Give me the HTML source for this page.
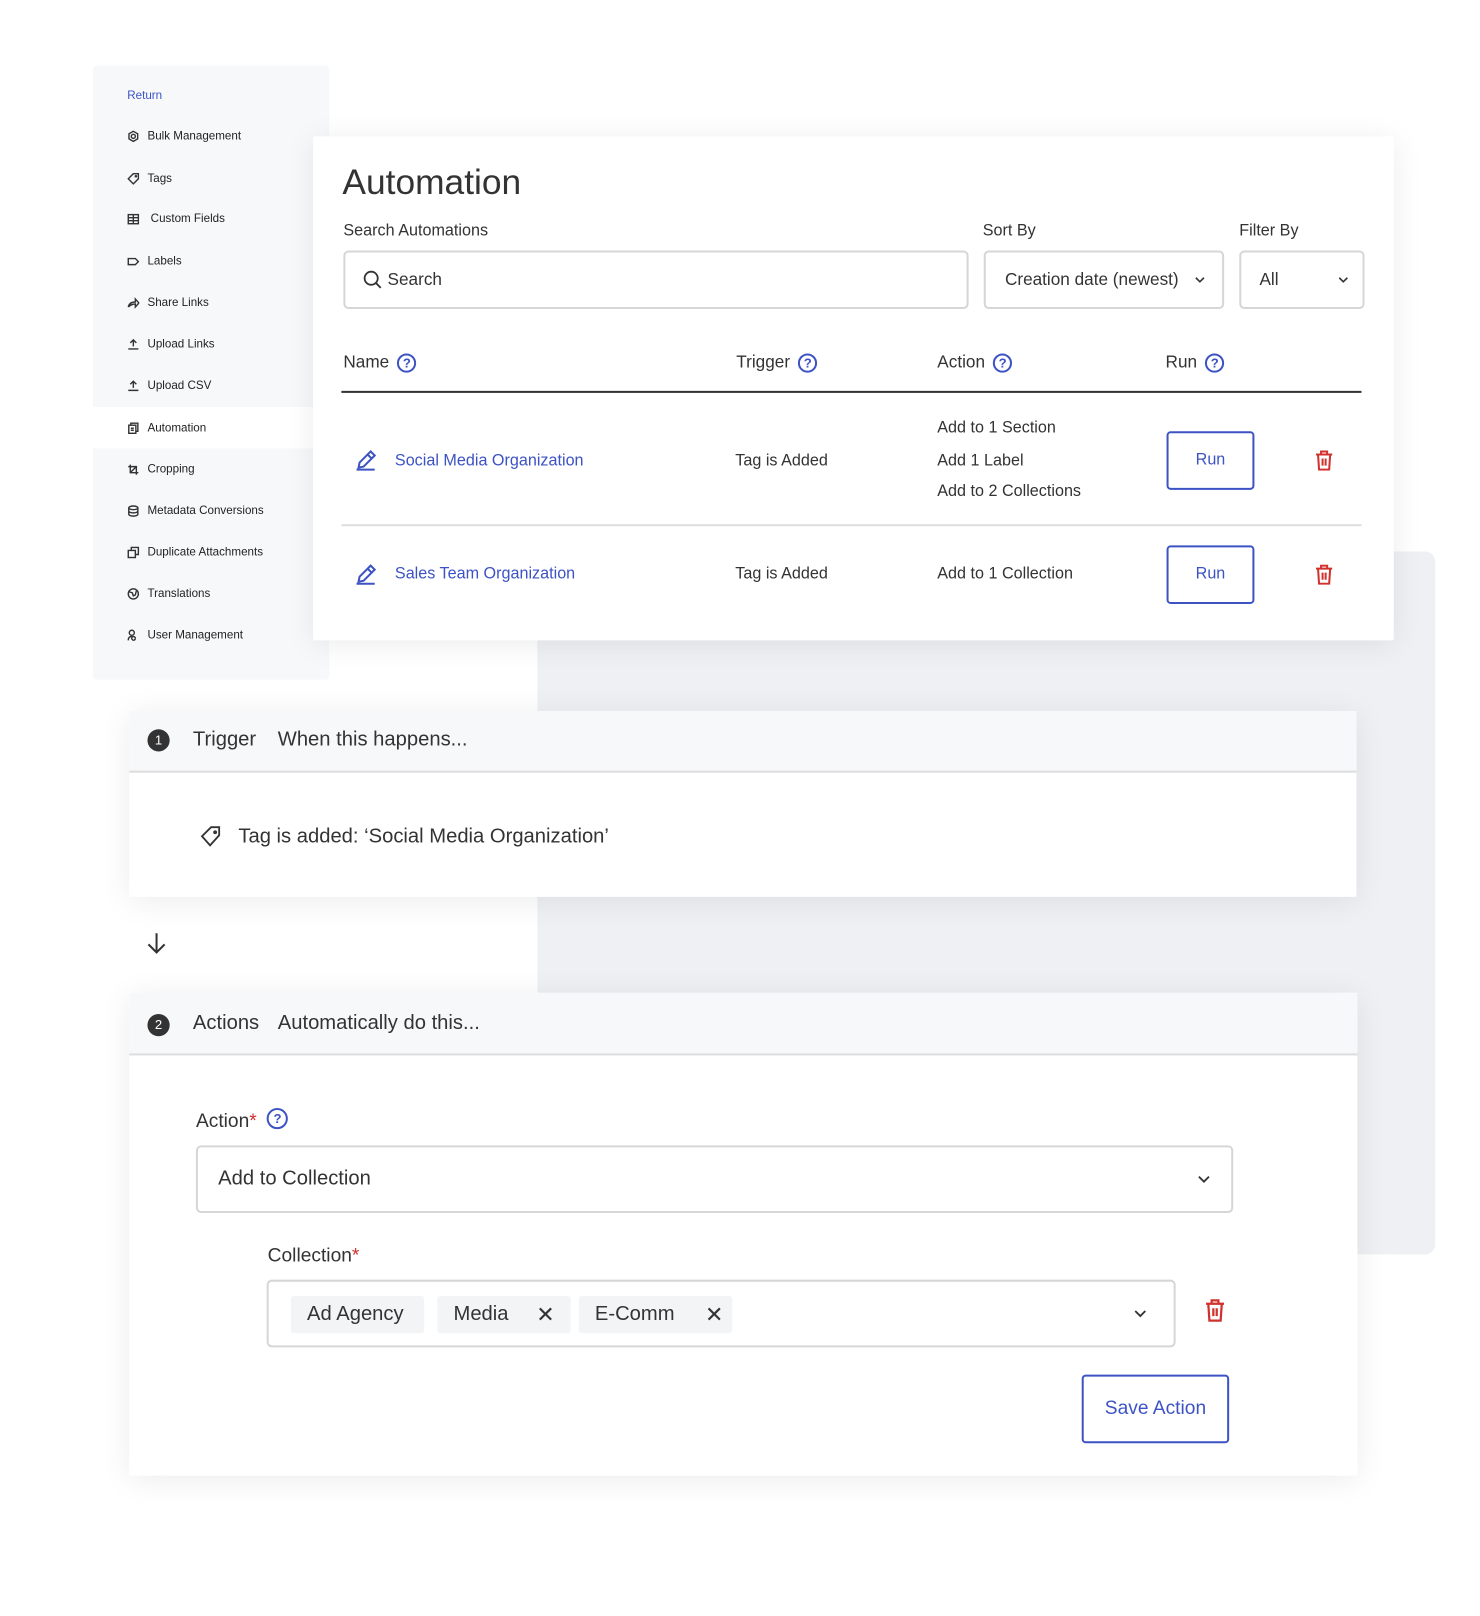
<!DOCTYPE html>
<html><head><meta charset="utf-8"><style>
*{box-sizing:border-box;margin:0;padding:0}
body{width:1480px;height:1600px;background:#fff;font-family:"Liberation Sans",sans-serif;color:#333;position:relative;overflow:hidden}
#w{position:absolute;left:0;top:0;width:1480px;height:1600px;transform:scale(1.01);transform-origin:0 0}
.abs{position:absolute}
.side{left:92px;top:65px;width:234px;height:608px;background:#f7f8fa;border-radius:4px}
.si{position:absolute;left:34px;font-size:11.5px;color:#222;display:flex;align-items:center;gap:8px;transform:translateY(-50%)}
.si svg{width:12px;height:12px;stroke:#333;fill:none;stroke-width:1.4}
.panel{left:532px;top:546px;width:889px;height:696px;background:#eef0f4;border-radius:10px}
.card{background:#fff;box-shadow:0 4px 30px rgba(0,0,0,.08)}
.lbl{font-size:16px;color:#333}
.box{position:absolute;border:2px solid #d6d6d6;border-radius:5px;background:#fff;display:flex;align-items:center;font-size:17px;color:#333}
.help{display:inline-block;width:19px;height:19px;border:2px solid #3d53c4;border-radius:50%;color:#3d53c4;font-size:13px;font-weight:bold;text-align:center;line-height:15px;vertical-align:middle;margin-left:8px}
.th{position:absolute;top:359px;transform:translateY(-50%);font-size:17px}
.td{position:absolute;font-size:16px;transform:translateY(-50%)}
.link{color:#3d53c4}
.run{position:absolute;width:87px;height:58px;border:2px solid #3d53c4;border-radius:4px;color:#3d53c4;font-size:16px;display:flex;align-items:center;justify-content:center}
.trash{position:absolute;width:18px;height:20px}
.hdr{position:absolute;left:0;right:0;top:0;background:#f7f8fa;border-bottom:2px solid #ddd}
.num{position:absolute;width:22px;height:22px;border-radius:50%;background:#333;color:#fff;font-size:13px;text-align:center;line-height:22px}
.chip{position:absolute;top:14px;height:37px;background:#f3f4f6;border-radius:3px;font-size:20px;display:flex;align-items:center;padding-left:16px}
</style></head><body><div id="w">

<div class="abs side">
<div class="si" style="top:30px;color:#3d53c4">Return</div>
<div class="si" style="top:70px"><svg viewBox="0 0 12 12"><circle cx="6" cy="6" r="2"/><path d="M6 1l4.3 2.5v5L6 11 1.7 8.5v-5z"/></svg>Bulk Management</div>
<div class="si" style="top:112px"><svg viewBox="0 0 12 12"><path d="M1 6l5-5h5v5l-5 5z"/><circle cx="8.5" cy="3.5" r=".6"/></svg>Tags</div>
<div class="si" style="top:152px"><svg viewBox="0 0 12 12"><rect x="1" y="1.5" width="10" height="9"/><path d="M1 4.5h10M1 7.5h10M6 1.5v9"/></svg>&nbsp;Custom Fields</div>
<div class="si" style="top:194px"><svg viewBox="0 0 12 12"><path d="M1 3h7l3 3-3 3H1z"/></svg>Labels</div>
<div class="si" style="top:235px"><svg viewBox="0 0 12 12"><path d="M1 10q1-5 7-5V2l3.5 4L8 10V7q-4 0-7 3"/></svg>Share Links</div>
<div class="si" style="top:276px"><svg viewBox="0 0 12 12"><path d="M6 8V1.5M3 4.5l3-3 3 3M1 10.5h10"/></svg>Upload Links</div>
<div class="si" style="top:317px"><svg viewBox="0 0 12 12"><path d="M6 8V1.5M3 4.5l3-3 3 3M1 10.5h10"/></svg>Upload CSV</div>
<div class="abs" style="left:0;top:338px;width:218px;height:41px;background:#fff"></div>
<div class="si" style="top:359px"><svg viewBox="0 0 12 12"><rect x="1.5" y="3" width="7" height="8"/><path d="M3.5 3V1h7v8H8.5M3.5 6h3M3.5 8h3"/></svg>Automation</div>
<div class="si" style="top:400px"><svg viewBox="0 0 12 12"><path d="M3 1v8h8M1 3h8v8M3 9l6-6"/></svg>Cropping</div>
<div class="si" style="top:441px"><svg viewBox="0 0 12 12"><ellipse cx="6" cy="2.8" rx="4.5" ry="1.8"/><path d="M1.5 2.8v6.4c0 1 2 1.8 4.5 1.8s4.5-.8 4.5-1.8V2.8M1.5 6c0 1 2 1.8 4.5 1.8s4.5-.8 4.5-1.8"/></svg>Metadata Conversions</div>
<div class="si" style="top:482px"><svg viewBox="0 0 12 12"><rect x="1" y="4" width="7" height="7"/><path d="M4 4V1h7v7H8"/></svg>Duplicate Attachments</div>
<div class="si" style="top:523px"><svg viewBox="0 0 12 12"><circle cx="6" cy="6" r="5"/><path d="M2 4l3 1 1 3 2-1 1-4"/></svg>Translations</div>
<div class="si" style="top:564px"><svg viewBox="0 0 12 12"><circle cx="4.5" cy="3.5" r="2.5"/><path d="M1 11q0-4 4-4M8 9a1.8 1.8 0 1 0 0 .1"/></svg>User Management</div>
</div>

<div class="abs panel"></div>

<div class="abs card" style="left:310px;top:135px;width:1070px;height:499px;border-radius:2px"></div>
<div class="abs" style="left:339px;top:161px;font-size:35px;color:#333">Automation</div>
<div class="abs lbl" style="left:340px;top:220px">Search Automations</div>
<div class="abs lbl" style="left:973px;top:220px">Sort By</div>
<div class="abs lbl" style="left:1227px;top:220px">Filter By</div>
<div class="box" style="left:340px;top:248px;width:619px;height:58px;padding-left:17px"><svg width="20" height="20" viewBox="0 0 20 20" fill="none" stroke="#333" stroke-width="1.8"><circle cx="8.5" cy="8.5" r="6.5"/><path d="M13.5 13.5l4.5 4.5"/></svg>&nbsp;Search</div>
<div class="box" style="left:974px;top:248px;width:238px;height:58px;padding-left:19px">Creation date (newest)<svg style="margin-left:15px" width="12" height="8" viewBox="0 0 12 8" fill="none" stroke="#333" stroke-width="1.6"><path d="M2 2l4 4 4-4"/></svg></div>
<div class="box" style="left:1227px;top:248px;width:124px;height:58px;padding-left:18px">All<svg style="margin-left:58px" width="12" height="8" viewBox="0 0 12 8" fill="none" stroke="#333" stroke-width="1.6"><path d="M2 2l4 4 4-4"/></svg></div>

<div class="th" style="left:340px">Name<span class="help">?</span></div>
<div class="th" style="left:729px">Trigger<span class="help">?</span></div>
<div class="th" style="left:928px">Action<span class="help">?</span></div>
<div class="th" style="left:1154px">Run<span class="help">?</span></div>
<div class="abs" style="left:338px;top:387px;width:1010px;height:2px;background:#333"></div>

<svg class="abs" style="left:350px;top:444px" width="24" height="24" viewBox="0 0 24 24" fill="none" stroke="#3d53c4" stroke-width="2"><path d="M3 21h18M5 19l1-5L17 3l4 4-11 11z M14 6l4 4"/></svg>
<div class="td link" style="left:391px;top:457px">Social Media Organization</div>
<div class="td" style="left:728px;top:457px">Tag is Added</div>
<div class="td" style="left:928px;top:424px">Add to 1 Section</div>
<div class="td" style="left:928px;top:457px">Add 1 Label</div>
<div class="td" style="left:928px;top:487px">Add to 2 Collections</div>
<div class="run" style="left:1155px;top:427px">Run</div>
<svg class="trash" style="left:1302px;top:446px" viewBox="0 0 18 20" fill="none" stroke="#d0312d" stroke-width="2"><path d="M1 4h16M6 4V1h6v3M3 4l1 15h10l1-15M7.5 8v7M10.5 8v7"/></svg>
<div class="abs" style="left:338px;top:519px;width:1010px;height:2px;background:#ddd"></div>

<svg class="abs" style="left:350px;top:557px" width="24" height="24" viewBox="0 0 24 24" fill="none" stroke="#3d53c4" stroke-width="2"><path d="M3 21h18M5 19l1-5L17 3l4 4-11 11z M14 6l4 4"/></svg>
<div class="td link" style="left:391px;top:569px">Sales Team Organization</div>
<div class="td" style="left:728px;top:569px">Tag is Added</div>
<div class="td" style="left:928px;top:569px">Add to 1 Collection</div>
<div class="run" style="left:1155px;top:540px">Run</div>
<svg class="trash" style="left:1302px;top:559px" viewBox="0 0 18 20" fill="none" stroke="#d0312d" stroke-width="2"><path d="M1 4h16M6 4V1h6v3M3 4l1 15h10l1-15M7.5 8v7M10.5 8v7"/></svg>

<div class="abs card" style="left:128px;top:704px;width:1215px;height:184px">
 <div class="hdr" style="height:61px"></div>
 <div class="num" style="left:18px;top:18px">1</div>
 <div class="abs" style="left:63px;top:17px;font-size:20px">Trigger</div>
 <div class="abs" style="left:147px;top:17px;font-size:20px">When this happens...</div>
 <svg class="abs" style="left:70px;top:113px" width="22" height="22" viewBox="0 0 22 22" fill="none" stroke="#333" stroke-width="1.8"><path d="M2 11L11 2h8v8l-9 10z"/><circle cx="15" cy="7" r="1"/></svg>
 <div class="abs" style="left:108px;top:113px;font-size:20px">Tag is added: ‘Social Media Organization’</div>
</div>

<svg class="abs" style="left:145px;top:923px" width="20" height="22" viewBox="0 0 20 22" fill="none" stroke="#333" stroke-width="2"><path d="M10 1v19M2 12l8 8 8-8"/></svg>

<div class="abs card" style="left:128px;top:983px;width:1216px;height:478px">
 <div class="hdr" style="height:62px"></div>
 <div class="num" style="left:18px;top:21px">2</div>
 <div class="abs" style="left:63px;top:19px;font-size:20px">Actions</div>
 <div class="abs" style="left:147px;top:19px;font-size:20px">Automatically do this...</div>
 <div class="abs" style="left:66px;top:117px;font-size:19px">Action<span style="color:#d0312d">*</span><span class="help" style="width:21px;height:21px;line-height:17px;margin-left:10px;margin-top:-6px">?</span></div>
 <div class="box" style="left:66px;top:151px;width:1027px;height:67px;padding-left:20px;font-size:20px">Add to Collection<svg style="position:absolute;right:20px" width="14" height="9" viewBox="0 0 14 9" fill="none" stroke="#333" stroke-width="1.8"><path d="M2 2l5 5 5-5"/></svg></div>
 <div class="abs" style="left:137px;top:250px;font-size:19px">Collection<span style="color:#d0312d">*</span></div>
 <div class="box" style="left:136px;top:284px;width:900px;height:67px">
  <div class="chip" style="left:22px;width:132px">Ad Agency</div>
  <div class="chip" style="left:167px;width:132px">Media<span style="position:absolute;left:98px;font-size:22px">✕</span></div>
  <div class="chip" style="left:307px;width:152px">E-Comm<span style="position:absolute;left:125px;font-size:22px">✕</span></div>
  <svg style="position:absolute;right:26px" width="14" height="9" viewBox="0 0 14 9" fill="none" stroke="#333" stroke-width="1.8"><path d="M2 2l5 5 5-5"/></svg>
 </div>
 <svg class="abs" style="left:1065px;top:303px" width="20" height="23" viewBox="0 0 18 20" fill="none" stroke="#d0312d" stroke-width="2"><path d="M1 4h16M6 4V1h6v3M3 4l1 15h10l1-15M7.5 8v7M10.5 8v7"/></svg>
 <div class="run" style="left:943px;top:378px;width:146px;height:68px;font-size:19px">Save Action</div>
</div>
</div></body></html>
